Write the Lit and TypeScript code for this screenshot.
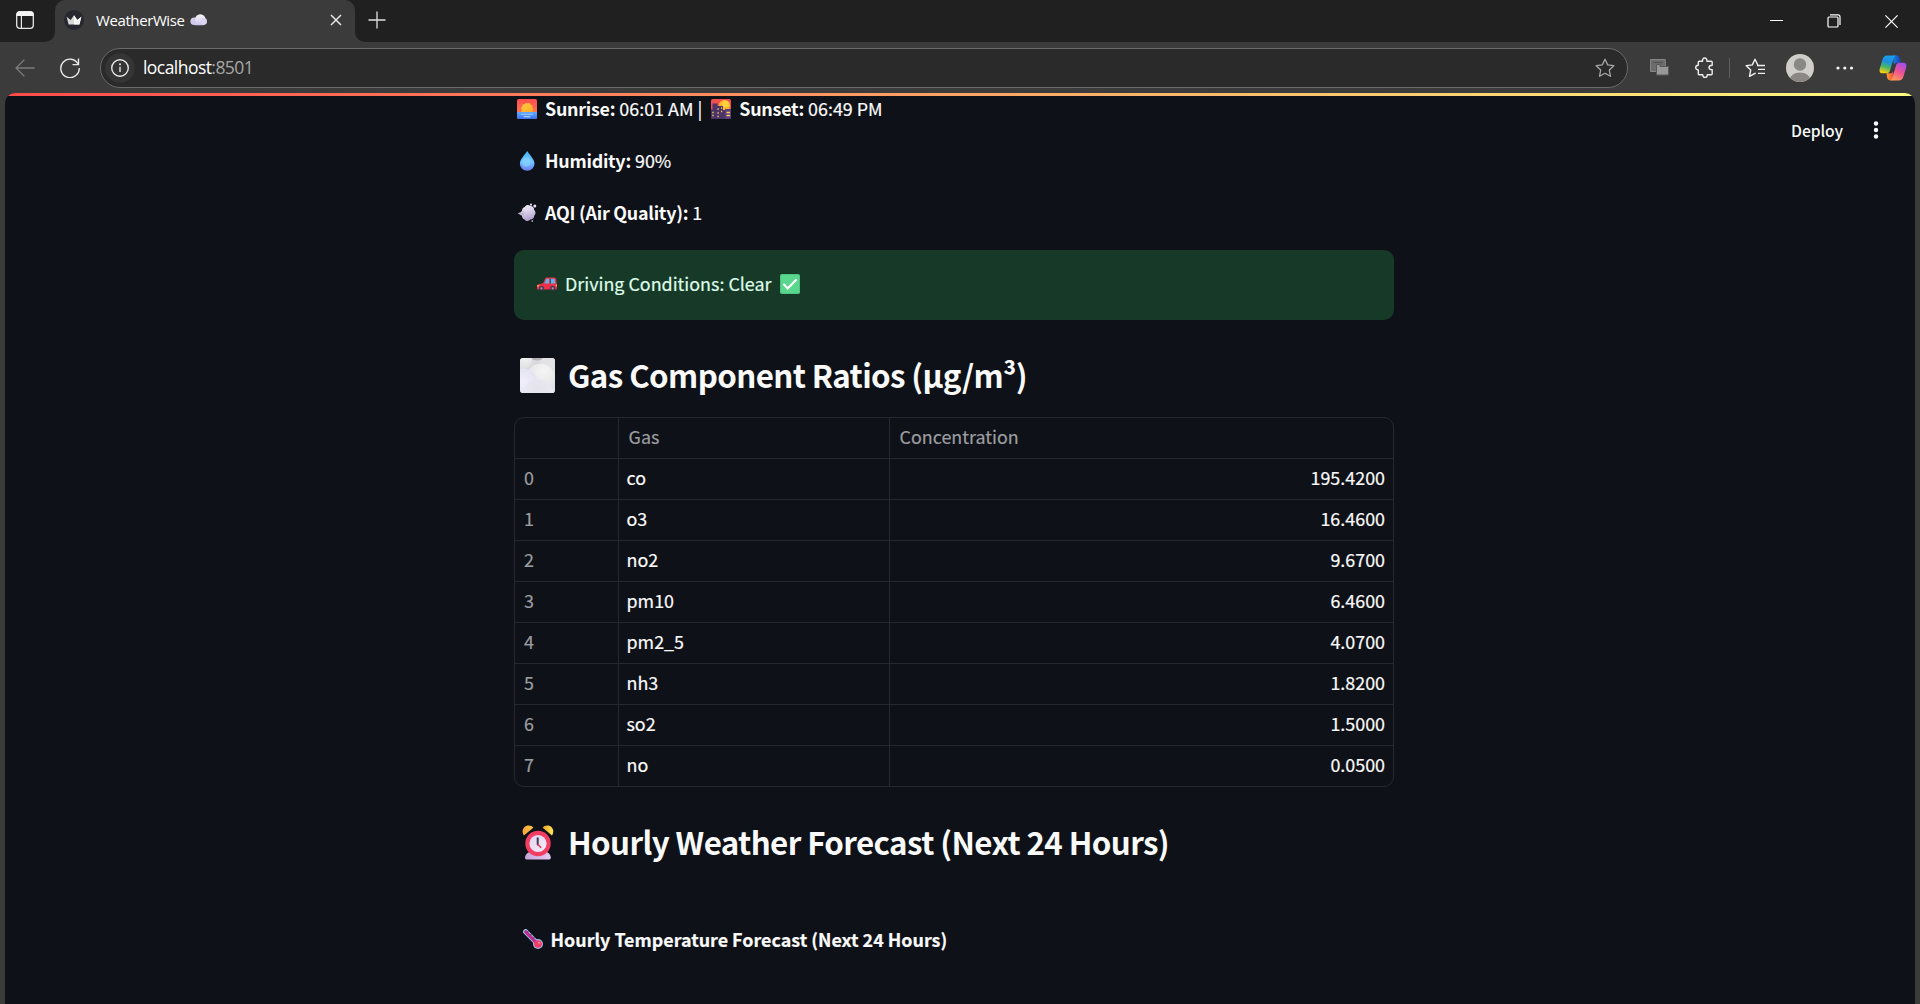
import { LitElement, html, svg, css } from "lit";
import { customElement } from "lit/decorators.js";

const gases: [string, string][] = [
  ["co", "195.4200"],
  ["o3", "16.4600"],
  ["no2", "9.6700"],
  ["pm10", "6.4600"],
  ["pm2_5", "4.0700"],
  ["nh3", "1.8200"],
  ["so2", "1.5000"],
  ["no", "0.0500"],
];

const icon = (w: number, h: number, body: unknown, cls = "") =>
  html`<svg class="icon ${cls}" width=${w} height=${h} viewBox="0 0 ${w} ${h}" fill="none">${body}</svg>`;

const tabMenu = icon(20, 20, svg`
  <rect x="1.7" y="1.7" width="16.6" height="16.6" rx="3" stroke="#e6e6e6" stroke-width="1.3"/>
  <path d="M1.5 6V4.5a3 3 0 0 1 3-3h11a3 3 0 0 1 3 3V6z" fill="#f4f4f4"/>
  <path d="M6.4 6v12" stroke="#e6e6e6" stroke-width="1.2"/>`);

const favicon = icon(20, 20, svg`
  <circle cx="10" cy="10" r="10" fill="#262730"/>
  <path d="M2.6 6.8l4.1 3.1L10 5.2l3.300 4.700 4.100-3.100-2 7.700H4.600z" fill="#d8d8d8"/>
  <path d="M10 5.200l3.300 4.700 4.100-3.100-2 7.700H10z" fill="#f7f7f7"/>`);

const cloud = icon(17, 12, svg`
  <defs><linearGradient id="cl" x1="0" y1="0" x2="0" y2="1"><stop stop-color="#f6f4fa"/><stop offset="1" stop-color="#cfc6ee"/></linearGradient></defs>
  <circle cx="4.200" cy="7.300" r="3.800" fill="#d2cdea"/>
  <rect x="3" y="6" width="12.500" height="5.200" rx="2.600" fill="#cfc6ee"/>
  <circle cx="10.300" cy="5.600" r="5.300" fill="url(#cl)"/>
  <circle cx="13.700" cy="7.400" r="3.300" fill="#ddd6f2"/>`);

const closeTab = icon(12, 12, svg`<path d="M1 1l10 10M11 1L1 11" stroke="#e8e8e8" stroke-width="1.500"/>`);
const plus = icon(18, 18, svg`<path d="M9 .5v17M.5 9h17" stroke="#e0e0e0" stroke-width="1.300"/>`);
const minimize = icon(13, 13, svg`<path d="M0 5.500h13" stroke="#fff"/>`);
const restore = icon(14, 14, svg`
  <rect x="1" y="3" width="10" height="10" rx="1" stroke="#fff" stroke-width="1.200"/>
  <path d="M3 .9h8a2 2 0 0 1 2 2v8" stroke="#fff" stroke-width="1.200"/>`);
const closeWin = icon(13, 13, svg`<path d="M.4.4l12.200 12.200M12.600.4L.4 12.600" stroke="#fff" stroke-width="1.200"/>`);

const back = icon(20, 18, svg`<path d="M19.600 9H1M9.300.8L1 9l8.300 8.200" stroke="#7b7b7b" stroke-width="1.300"/>`);
const reload = icon(20, 20, svg`
  <path d="M18.200 6.200A9.200 9.200 0 1 0 19.200 10" stroke="#e8e8e8" stroke-width="1.400"/>
  <path d="M18.500.6v6h-6" stroke="#e8e8e8" stroke-width="1.400"/>`);
const info = icon(30, 30, svg`
  <circle cx="15" cy="15" r="14.800" fill="#353535"/>
  <circle cx="15" cy="15" r="8.300" stroke="#e8e8e8" stroke-width="1.400"/>
  <circle cx="15" cy="11.300" r="1" fill="#e8e8e8"/><path d="M15 13.700v5.300" stroke="#e8e8e8" stroke-width="1.400"/>`);
const star = icon(20, 20, svg`<path d="M10 1.200l2.700 5.700 6.100.8-4.500 4.300 1.200 6.300L10 15.300l-5.500 3 1.200-6.300L1.200 7.700l6.100-.8z" stroke="#a6a6a6" stroke-width="1.300" stroke-linejoin="round"/>`);
const screens = icon(20, 17, svg`
  <path d="M.5.5h14.800v12H.5z" fill="#6c6c6c" stroke="#858585"/><path d="M3 3.500h10" stroke="#505050"/>
  <path d="M6.500 8V5.500H10v2h8.500v8.500h-12z" fill="#989898" stroke="#585858"/>`);
const puzzle = icon(20, 21, svg`<path d="M3.300 5.200a1 1 0 0 1 1-1h3.200c-.1-2 .7-3.200 2.200-3.200s2.300 1.200 2.200 3.200h4.300a1 1 0 0 1 1 1v3c-2 0-3.200.8-3.200 2.300s1.200 2.300 3.200 2.300v4a1 1 0 0 1-1 1h-3.900c0 1.700-.9 2.700-2.300 2.700s-2.300-1-2.300-2.700H4.300a1 1 0 0 1-1-1v-3.900c-1.700 0-2.600-.9-2.600-2.300s.9-2.300 2.600-2.300z" stroke="#ececec" stroke-width="1.400" stroke-linejoin="round"/>`);
const favorites = icon(20, 20, svg`
  <path d="M12.800 7L10 1.200 7.300 6.900l-6.100.8L5.700 12l-1.200 6.300 5.500-3 .7.400" stroke="#f0f0f0" stroke-width="1.400" stroke-linejoin="round"/>
  <path d="M12 7.500h8M13 11.300h7M13 15.300h7" stroke="#f0f0f0" stroke-width="1.300"/>`);
const avatar = icon(28, 28, svg`
  <defs><clipPath id="av"><circle cx="14" cy="14" r="14"/></clipPath></defs>
  <g clip-path="url(#av)"><rect width="28" height="28" fill="#d0cecb"/><circle cx="14" cy="10.500" r="6.200" fill="#8b8784"/><ellipse cx="14" cy="26.500" rx="10.500" ry="8" fill="#8b8784"/></g>`);
const dots = icon(18, 4, svg`<circle cx="2" cy="2" r="1.600" fill="#f4f4f4"/><circle cx="8.800" cy="2" r="1.600" fill="#f4f4f4"/><circle cx="15.500" cy="2" r="1.600" fill="#f4f4f4"/>`);
const copilot = icon(28, 26, svg`
  <defs>
    <linearGradient id="c1" x1=".6" y1="0" x2=".3" y2="1"><stop stop-color="#1b9fe8"/><stop offset=".35" stop-color="#1d8ee0"/><stop offset=".65" stop-color="#48b56a"/><stop offset="1" stop-color="#ffd00a"/></linearGradient>
    <linearGradient id="c2" x1=".8" y1="0" x2=".3" y2="1"><stop stop-color="#a04df0"/><stop offset=".5" stop-color="#ee5196"/><stop offset="1" stop-color="#ff9a55"/></linearGradient>
    <linearGradient id="c3" x1="0" y1="0" x2="1" y2="0"><stop stop-color="#1680dd"/><stop offset="1" stop-color="#1c3fc0"/></linearGradient>
    <linearGradient id="c4" x1="0" y1="0" x2="1" y2="0"><stop stop-color="#ffa130"/><stop offset="1" stop-color="#f0443c"/></linearGradient>
  </defs>
  <path d="M14 .6h3.600c1.700 0 2.600.9 3 2.600l1.400 4.500h-4.300c-1.600 0-2.400 1-2.900 2.600z" fill="url(#c3)"/>
  <path d="M7.500 18.200h4.200c1.200 0 1.700-.5 2.200-2l1 9H11c-1.700 0-2.500-1-2.900-2.600z" fill="url(#c4)"/>
  <path d="M8.200.6h9.300c-1.600.2-2.400 1.400-2.900 3l-3.600 12c-.5 1.700-1.500 2.700-3.200 2.700H3.600C.7 18.300 0 16 .9 13.200L3.500 4.600C4.300 2 5.700.6 8.200.6z" fill="url(#c1)"/>
  <path d="M19.800 25.400h-9.300c1.600-.2 2.400-1.400 2.900-3l3.600-12c.5-1.700 1.500-2.700 3.200-2.700h4.200c2.900 0 3.600 2.300 2.700 5.100l-2.600 8.600c-.8 2.600-2.200 4-4.700 4z" fill="url(#c2)"/>`);
const kebab = icon(6, 18, svg`<circle cx="3" cy="2.500" r="2.200" fill="#fafafa"/><circle cx="3" cy="9" r="2.200" fill="#fafafa"/><circle cx="3" cy="15.500" r="2.200" fill="#fafafa"/>`, "kebab");

const sunrise = icon(20, 20, svg`
  <defs>
    <linearGradient id="sr" x1="0" y1="0" x2="0" y2="1"><stop stop-color="#ff4c50"/><stop offset="1" stop-color="#ff8a4e"/></linearGradient>
    <linearGradient id="sw" x1="0" y1="0" x2="0" y2="1"><stop stop-color="#62aaff"/><stop offset="1" stop-color="#3c72f0"/></linearGradient>
    <linearGradient id="sn" x1="0" y1="0" x2="1" y2="1"><stop stop-color="#ffd23c"/><stop offset="1" stop-color="#ffa52c"/></linearGradient>
  </defs>
  <rect width="20" height="20" rx="1.800" fill="url(#sr)"/>
  <path d="M0 13h20v5.200a1.800 1.800 0 0 1-1.800 1.800H1.800A1.800 1.800 0 0 1 0 18.200z" fill="url(#sw)"/>
  <path d="M4.200 13l.6-2.100-.8-1.800 1.400-1.500.2-2 2-.3 1.300-1.600 1.700.8 2-.5 1 1.700 1.900.7-.1 2 1.100 1.700-1 1.500.4 1.400z" fill="url(#sn)"/>
  <path d="M4.500 15.300h11M7 17.600h6" stroke="#a9d0ff" stroke-width="1.100" stroke-linecap="round"/>`);
const sunset = icon(20, 20, svg`
  <defs><linearGradient id="st" x1="0" y1="0" x2="0" y2="1"><stop stop-color="#f2504c"/><stop offset="1" stop-color="#d9506a"/></linearGradient></defs>
  <rect width="20" height="20" rx="1.800" fill="url(#st)"/>
  <circle cx="13.500" cy="6.500" r="5.600" fill="#ffb52e"/><circle cx="14.500" cy="5" r="3.200" fill="#ffd23d"/>
  <path d="M0 10.500h1.500V4.500h5V7h5.500v4h2v-1h6v8.200a1.800 1.800 0 0 1-1.800 1.800H1.800A1.800 1.800 0 0 1 0 18.200z" fill="#4b3468"/>
  <path d="M14 10h6v8.200a1.800 1.800 0 0 1-1.800 1.800H14z" fill="#5c3e7c"/>
  <path d="M1.300 13.500h1.300M1.300 16.500h1.300M6.500 10h1.300M6.500 14h1.300M10 9h1.200M10 12.500h1.200M6.500 17.500h1.300M15.500 13.500h3.500M15.500 16.500h3.500" stroke="#ffc95e" stroke-width="1.400"/>`);
const drop = icon(20, 20, svg`
  <defs><linearGradient id="dr" x1="0" y1="0" x2="0" y2="1"><stop stop-color="#45b6f6"/><stop offset=".55" stop-color="#70c4ff"/><stop offset="1" stop-color="#6c7cf2"/></linearGradient></defs>
  <path d="M10.200 0c2.400 3.800 7.300 8.400 7.300 12.500a7.300 7.300 0 0 1-14.600 0C2.900 8.400 7.800 3.800 10.200 0z" fill="url(#dr)"/>
  <ellipse cx="9.500" cy="11" rx="4.200" ry="4.800" fill="#8ad8ff" opacity=".6"/>`);
const puff = icon(20, 20, svg`
  <defs><linearGradient id="pf" x1="0" y1="0" x2=".3" y2="1"><stop stop-color="#f4effa"/><stop offset=".5" stop-color="#dcd2ea"/><stop offset="1" stop-color="#b3a4cf"/></linearGradient></defs>
  <path d="M.8 10.400l4.200-1.700c-.2-2.500.9-4.200 2.800-4.700 1.200-2.200 4-2.500 5.500-1 2.500.1 4 1.800 3.800 3.700 1.800 1.700 1.900 4.300.2 5.900-.1 2.500-1.700 3.900-3.900 4-1.800 1.900-4.500 1.700-5.800-.2-1.900-.5-2.800-2.300-2.600-4z" fill="url(#pf)"/>
  <path d="M1.500 10.300h6M4 8.300l3.500 1M3.500 12l4-1" stroke="#b5acc6" stroke-width=".8"/>
  <circle cx="14" cy="1.700" r="1.100" fill="#dcd4ee"/><circle cx="17.800" cy="2.900" r="1.500" fill="#e8e4f2"/><circle cx="15.300" cy="18" r=".9" fill="#a99cc4"/>`);
const car = icon(20, 14, svg`
  <path d="M1 7.500l5-1.200L8 2C8.400 1 9 .5 10 .5h7c1.600 0 2 .9 2.200 2.300l.6 4.200v4.500c0 .6-.3 1-1 1H1.200c-.7 0-1.200-.4-1.200-1V9c0-.8.3-1.300 1-1.500z" fill="#ee3148"/>
  <path d="M7.300 6.500l1.600-3.700c.3-.7.600-1 1.300-1H12v4.700zM13 1.800h3.600c.8 0 1 .4 1.100 1l.6 3.700H13z" fill="#5fb4e8"/>
  <path d="M13 1.800h1v4.700h-1z" fill="#3a4e80"/><path d="M0 8.200h2.200v1.400H0zM18.800 7.500H20v2h-1.200z" fill="#ffb24a"/>
  <circle cx="4.500" cy="11.300" r="2.500" fill="#493651"/><circle cx="15.700" cy="11.300" r="2.500" fill="#493651"/><circle cx="4.500" cy="11.300" r="1.100" fill="#a79cc0"/><circle cx="15.700" cy="11.300" r="1.100" fill="#a79cc0"/>`);
const check = icon(20, 20, svg`<rect width="20" height="20" rx="1.800" fill="#4dc580"/><rect x="1" y="1" width="18" height="18" rx="1.500" fill="#58d78d"/><path d="M4 10.600l3.700 3.900L16 6" stroke="#fff" stroke-width="2.200" stroke-linecap="round"/>`);
const fog = icon(35, 35, svg`
  <defs>
    <clipPath id="fc"><rect width="35" height="35" rx="3.300"/></clipPath>
    <radialGradient id="fa" cx=".6" cy=".25" r=".9"><stop stop-color="#f5f5f5"/><stop offset="1" stop-color="#dcdce0"/></radialGradient>
    <radialGradient id="fb" cx=".5" cy=".25" r=".9"><stop stop-color="#e4e3ec"/><stop offset="1" stop-color="#efecf8"/></radialGradient>
    <radialGradient id="fd" cx=".5" cy=".5" r=".6"><stop stop-color="#f3f0fc"/><stop offset="1" stop-color="#e2dff0"/></radialGradient>
  </defs>
  <g clip-path="url(#fc)">
    <rect width="35" height="35" fill="#dad9dd"/><circle cx="17" cy="-9" r="11.500" fill="#b4b4b8"/>
    <circle cx="31" cy="7" r="11" fill="#e3e3e5"/><circle cx="3" cy="2" r="9" fill="url(#fa)"/>
    <circle cx="35" cy="28" r="10" fill="#e1e0ec"/><circle cx="20.500" cy="20" r="14.300" fill="url(#fa)"/>
    <circle cx="3.500" cy="24" r="13.500" fill="url(#fd)"/><circle cx="18" cy="38" r="16.300" fill="url(#fb)"/>
  </g>`);
const clock = icon(32, 35, svg`
  <defs>
    <linearGradient id="ka" x1="0" y1="0" x2="1" y2="0"><stop stop-color="#f8a43c"/><stop offset="1" stop-color="#ffc342"/></linearGradient>
    <linearGradient id="kb" x1="0" y1="0" x2="1" y2="0"><stop stop-color="#f0a32c"/><stop offset="1" stop-color="#ffe953"/></linearGradient>
    <linearGradient id="kc" x1="0" y1="0" x2="1" y2="1"><stop stop-color="#ded6ee"/><stop offset="1" stop-color="#f5ecfa"/></linearGradient>
    <linearGradient id="kd" x1="0" y1="0" x2="1" y2="0"><stop stop-color="#c6a5d8"/><stop offset="1" stop-color="#e6cdf2"/></linearGradient>
  </defs>
  <path d="M1.800 10.500C-1.200 5.800 1.700.5 6.500.5c2.200 0 4 .8 4.800 2.200z" fill="url(#ka)"/>
  <path d="M30 10.500C33 5.800 30.200.5 25.500.5c-2.200 0-4 .8-4.800 2.200z" fill="url(#kb)"/>
  <path d="M3 32.500C3.500 29 6 27 9 27h14c3 0 5.500 2 5.800 5.500 0 1.300-.6 2-1.700 2H4.700c-1.100 0-1.700-.7-1.700-2z" fill="url(#kd)"/>
  <circle cx="16" cy="18.500" r="12.700" fill="#f43d62"/><circle cx="16" cy="18.500" r="8.600" fill="url(#kc)"/>
  <path d="M15.700 13.200v6.200" stroke="#4a3858" stroke-width="2" stroke-linecap="round"/><path d="M16 19.500l2.700 2.800" stroke="#d93a58" stroke-width="1.600" stroke-linecap="round"/>`);
const thermometer = icon(20, 20, svg`
  <path d="M2.700 2.700L14.500 14.800" stroke="#8fc1ea" stroke-width="5.200" stroke-linecap="round"/>
  <circle cx="15" cy="15" r="5" fill="#9bb8ee"/>
  <path d="M2.800 2.800L14 14.300" stroke="#c22d92" stroke-width="3.200" stroke-linecap="round"/>
  <circle cx="15" cy="15" r="3.800" fill="#f53b66"/>
  <path d="M5.500 1.900l-1.500 1.500M8.500 5l-1.500 1.500M11.500 8L10 9.500" stroke="#5c2a5c" stroke-width="1"/>
  <circle cx="16" cy="13.700" r="1" fill="#ff91a8"/>`);

@customElement("app-root")
export class AppRoot extends LitElement {
  static styles = css`
    :host { display: flex; flex-direction: column; width: 1920px; height: 1004px; overflow: hidden; background: #3b3b3b; }
    * { box-sizing: border-box; }
    .icon { display: block; flex: none; }
    .strip { display: flex; height: 42px; flex: none; background: #3b3b3b; }
    .lead { width: 55px; background: #202020; border-bottom-right-radius: 10px; padding: 10px 0 0 15px; }
    .tabwrap { width: 300px; background: #202020; }
    .tab { height: 42px; background: #3b3b3b; border-radius: 10px 10px 0 0; display: flex; align-items: center; padding: 0 13px 2px 9px; }
    .tabtitle { margin-left: 12px; width: 94px; font-size: 15px; color: #fff; white-space: nowrap; font-family: "Open Sans", sans-serif; letter-spacing: -0.4px; padding-bottom: 1px; }
    .rest { flex: 1; display: flex; align-items: center; background: #202020; border-bottom-left-radius: 10px; padding: 0 22px 3px 13px; }
    .grow { flex: 1; }
    .controls { display: flex; align-items: center; gap: 44px; padding-top: 3px; }
    .bar { display: flex; align-items: center; height: 51px; flex: none; padding: 0 13px 0 15px; }
    .reload { margin: 0 20px 0 25px; }
    .address { width: 1528px; height: 40px; border: 1px solid #6a6a6a; border-radius: 20px; background: #2a2a2a; display: flex; align-items: center; padding: 0 12px 0 4px; }
    .url { margin-left: 8px; font-family: "Open Sans", sans-serif; font-size: 17.5px; color: #fff; letter-spacing: -0.55px; line-height: 24px; padding-bottom: 1px; }
    .port { color: #a6a6a6; }
    .tools { flex: 1; display: flex; align-items: center; }
    .sep { width: 1px; height: 20px; background: #5f5f5f; }
    .t1 { margin-left: 22px; } .t2 { margin-left: 25px; } .t3 { margin: 0 15px 0 14px; } .t4 { margin-left: 21px; } .t5 { margin-left: 22px; } .t6 { margin-left: 25px; }
    .page { margin: 0 5px; flex: 1; min-height: 0; background: #0e1117; border-radius: 10px 10px 0 0; overflow: hidden; display: grid; grid-template-columns: 509px 880px 1fr; grid-template-rows: 3px 1fr; font-family: "Noto Sans CJK SC", sans-serif; color: #fafafa; }
    .rainbow { grid-column: 1 / 4; background: linear-gradient(90deg, #ff4b4b, #fffd80); }
    .main { grid-column: 2; grid-row: 2; margin-top: -4px; font-size: 17.9px; -webkit-text-stroke: 0.2px; }
    .side { grid-column: 3; grid-row: 2; display: flex; justify-content: flex-end; align-items: flex-start; padding: 23px 36px 0 0; }
    .deploy { font-size: 15.7px; line-height: 24px; margin-right: 29px; font-weight: 500; letter-spacing: -0.1px; padding-right: 1px; }
    .kebab { margin-top: 2px; }
    .line { display: flex; align-items: center; height: 32px; margin-bottom: 20px; padding-left: 3px; white-space: pre; line-height: 32px; }
    .line .icon { margin: 2px 8px 0 0; }
    .line b { letter-spacing: -0.25px; -webkit-text-stroke: 0; }
    .line .second { width: 9px; }
    .alert { margin-top: 22px; height: 70px; border-radius: 10px; background: #173928; color: #dffde9; display: flex; align-items: center; padding: 0 23px 2px; }
    .alert .msg { margin: 0 8px 0 8px; padding-bottom: 2px; }
    .head { display: flex; align-items: center; height: 42px; line-height: 42px; font-size: 31.3px; font-weight: 700; margin: 0; white-space: nowrap; letter-spacing: -0.6px; -webkit-text-stroke: 0; }
    .h-gas { margin-top: 34px; padding-left: 6px; gap: 13px; }
    .h-hour { margin-top: 34px; padding-left: 8px; gap: 14px; }
    .table { margin-top: 21px; height: 370px; border: 1px solid #26282d; border-radius: 10px; display: grid; grid-template-columns: 104px 271px 1fr; grid-auto-rows: 41px; overflow: hidden; }
    .cell { border-right: 1px solid #26282d; border-bottom: 1px solid #26282d; line-height: 36px; padding: 0 8px 0 7.5px; }
    .cell:nth-child(3n) { border-right: 0; text-align: right; }
    .cell:nth-last-child(-n + 3) { border-bottom: 0; }
    .cell.label, .cell.label:nth-child(3n) { color: #9c9da0; padding-left: 9.6px; text-align: left; }
    .cell.idx { color: #9c9da0; padding-left: 9px; }
    .chart { display: flex; align-items: center; height: 30px; line-height: 30px; margin-top: 61px; padding-left: 9px; gap: 7.500px; font-weight: 700; white-space: nowrap; }
  `;

  render() {
    return html`
      <div class="strip">
        <div class="lead">${tabMenu}</div>
        <div class="tabwrap"><div class="tab">${favicon}<span class="tabtitle">WeatherWise</span>${cloud}<span class="grow"></span>${closeTab}</div></div>
        <div class="rest">${plus}<span class="grow"></span><div class="controls">${minimize}${restore}${closeWin}</div></div>
      </div>
      <div class="bar">
        ${back}<div class="reload">${reload}</div>
        <div class="address">${info}<span class="url">localhost<span class="port">:8501</span></span><span class="grow"></span>${star}</div>
        <div class="tools">
          <div class="t1">${screens}</div><div class="t2">${puzzle}</div><div class="sep t3"></div>${favorites}
          <div class="t4">${avatar}</div><div class="t5">${dots}</div><div class="t6">${copilot}</div>
        </div>
      </div>
      <div class="page">
        <div class="rainbow"></div>
        <div class="main">
          <div class="line">${sunrise}<span><b>Sunrise:</b> 06:01 AM |</span><span class="second"></span>${sunset}<span><b>Sunset:</b> 06:49 PM</span></div>
          <div class="line">${drop}<span><b>Humidity:</b> 90%</span></div>
          <div class="line">${puff}<span><b>AQI (Air Quality):</b> 1</span></div>
          <div class="alert">${car}<span class="msg">Driving Conditions: Clear</span>${check}</div>
          <h3 class="head h-gas">${fog}<span>Gas Component Ratios (µg/m³)</span></h3>
          <div class="table">
            <div class="cell"></div><div class="cell label">Gas</div><div class="cell label">Concentration</div>
            ${gases.map(([n, v], i) => html`<div class="cell idx">${i}</div><div class="cell">${n}</div><div class="cell">${v}</div>`)}
          </div>
          <h3 class="head h-hour">${clock}<span>Hourly Weather Forecast (Next 24 Hours)</span></h3>
          <div class="chart">${thermometer}<span>Hourly Temperature Forecast (Next 24 Hours)</span></div>
        </div>
        <div class="side"><span class="deploy">Deploy</span>${kebab}</div>
      </div>
    `;
  }
}
